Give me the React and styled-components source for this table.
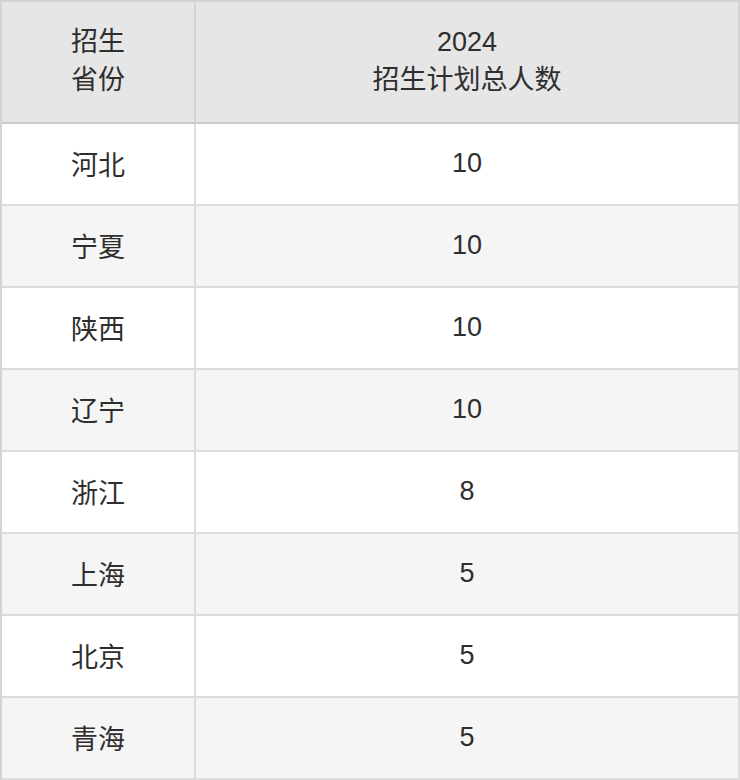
import React from 'react';
import styled, { createGlobalStyle } from 'styled-components';

const GlobalStyle = createGlobalStyle`
  html, body {
    margin: 0;
    padding: 0;
    background: #fff;
  }
  body {
    font-family: 'Liberation Sans', 'Noto Sans CJK SC', sans-serif;
    color: #333;
  }
`;

const Table = styled('table')`
  width: 740px;
  border-collapse: separate;
  border-spacing: 0;
  border-top: 2px solid #d4d4d4;
  border-left: 2px solid #d4d4d4;
  table-layout: fixed;
`;

const HeadCell = styled('th')`
  height: 118px;
  padding: 0 12px 2px;
  background: #e6e6e6;
  border-right: 2px solid #d4d4d4;
  border-bottom: 2px solid #cbcbcb;
  font-size: 27px;
  font-weight: normal;
  line-height: 38px;
  text-align: center;
  vertical-align: middle;
  color: #2e2e2e;
`;

const Row = styled('tr')`
  background: ${props => (props.striped ? '#f5f5f5' : '#fff')};
`;

const Cell = styled('td')`
  height: 78px;
  padding: 0 12px 2px;
  border-right: 2px solid #dcdcdc;
  border-bottom: 2px solid #dcdcdc;
  font-size: 27px;
  text-align: center;
  vertical-align: middle;
  color: #2e2e2e;
`;

const rows = [
  ['河北', 10],
  ['宁夏', 10],
  ['陕西', 10],
  ['辽宁', 10],
  ['浙江', 8],
  ['上海', 5],
  ['北京', 5],
  ['青海', 5],
];

export default function App() {
  return (
    <>
      <GlobalStyle />
      <Table>
        <colgroup>
          <col style={{ width: 194 }} />
          <col />
        </colgroup>
        <thead>
          <tr>
            <HeadCell>
              招生
              <br />
              省份
            </HeadCell>
            <HeadCell>
              2024
              <br />
              招生计划总人数
            </HeadCell>
          </tr>
        </thead>
        <tbody>
          {rows.map(([province, total], index) => (
            <Row key={province} striped={index % 2 === 1}>
              <Cell>{province}</Cell>
              <Cell>{total}</Cell>
            </Row>
          ))}
        </tbody>
      </Table>
    </>
  );
}
